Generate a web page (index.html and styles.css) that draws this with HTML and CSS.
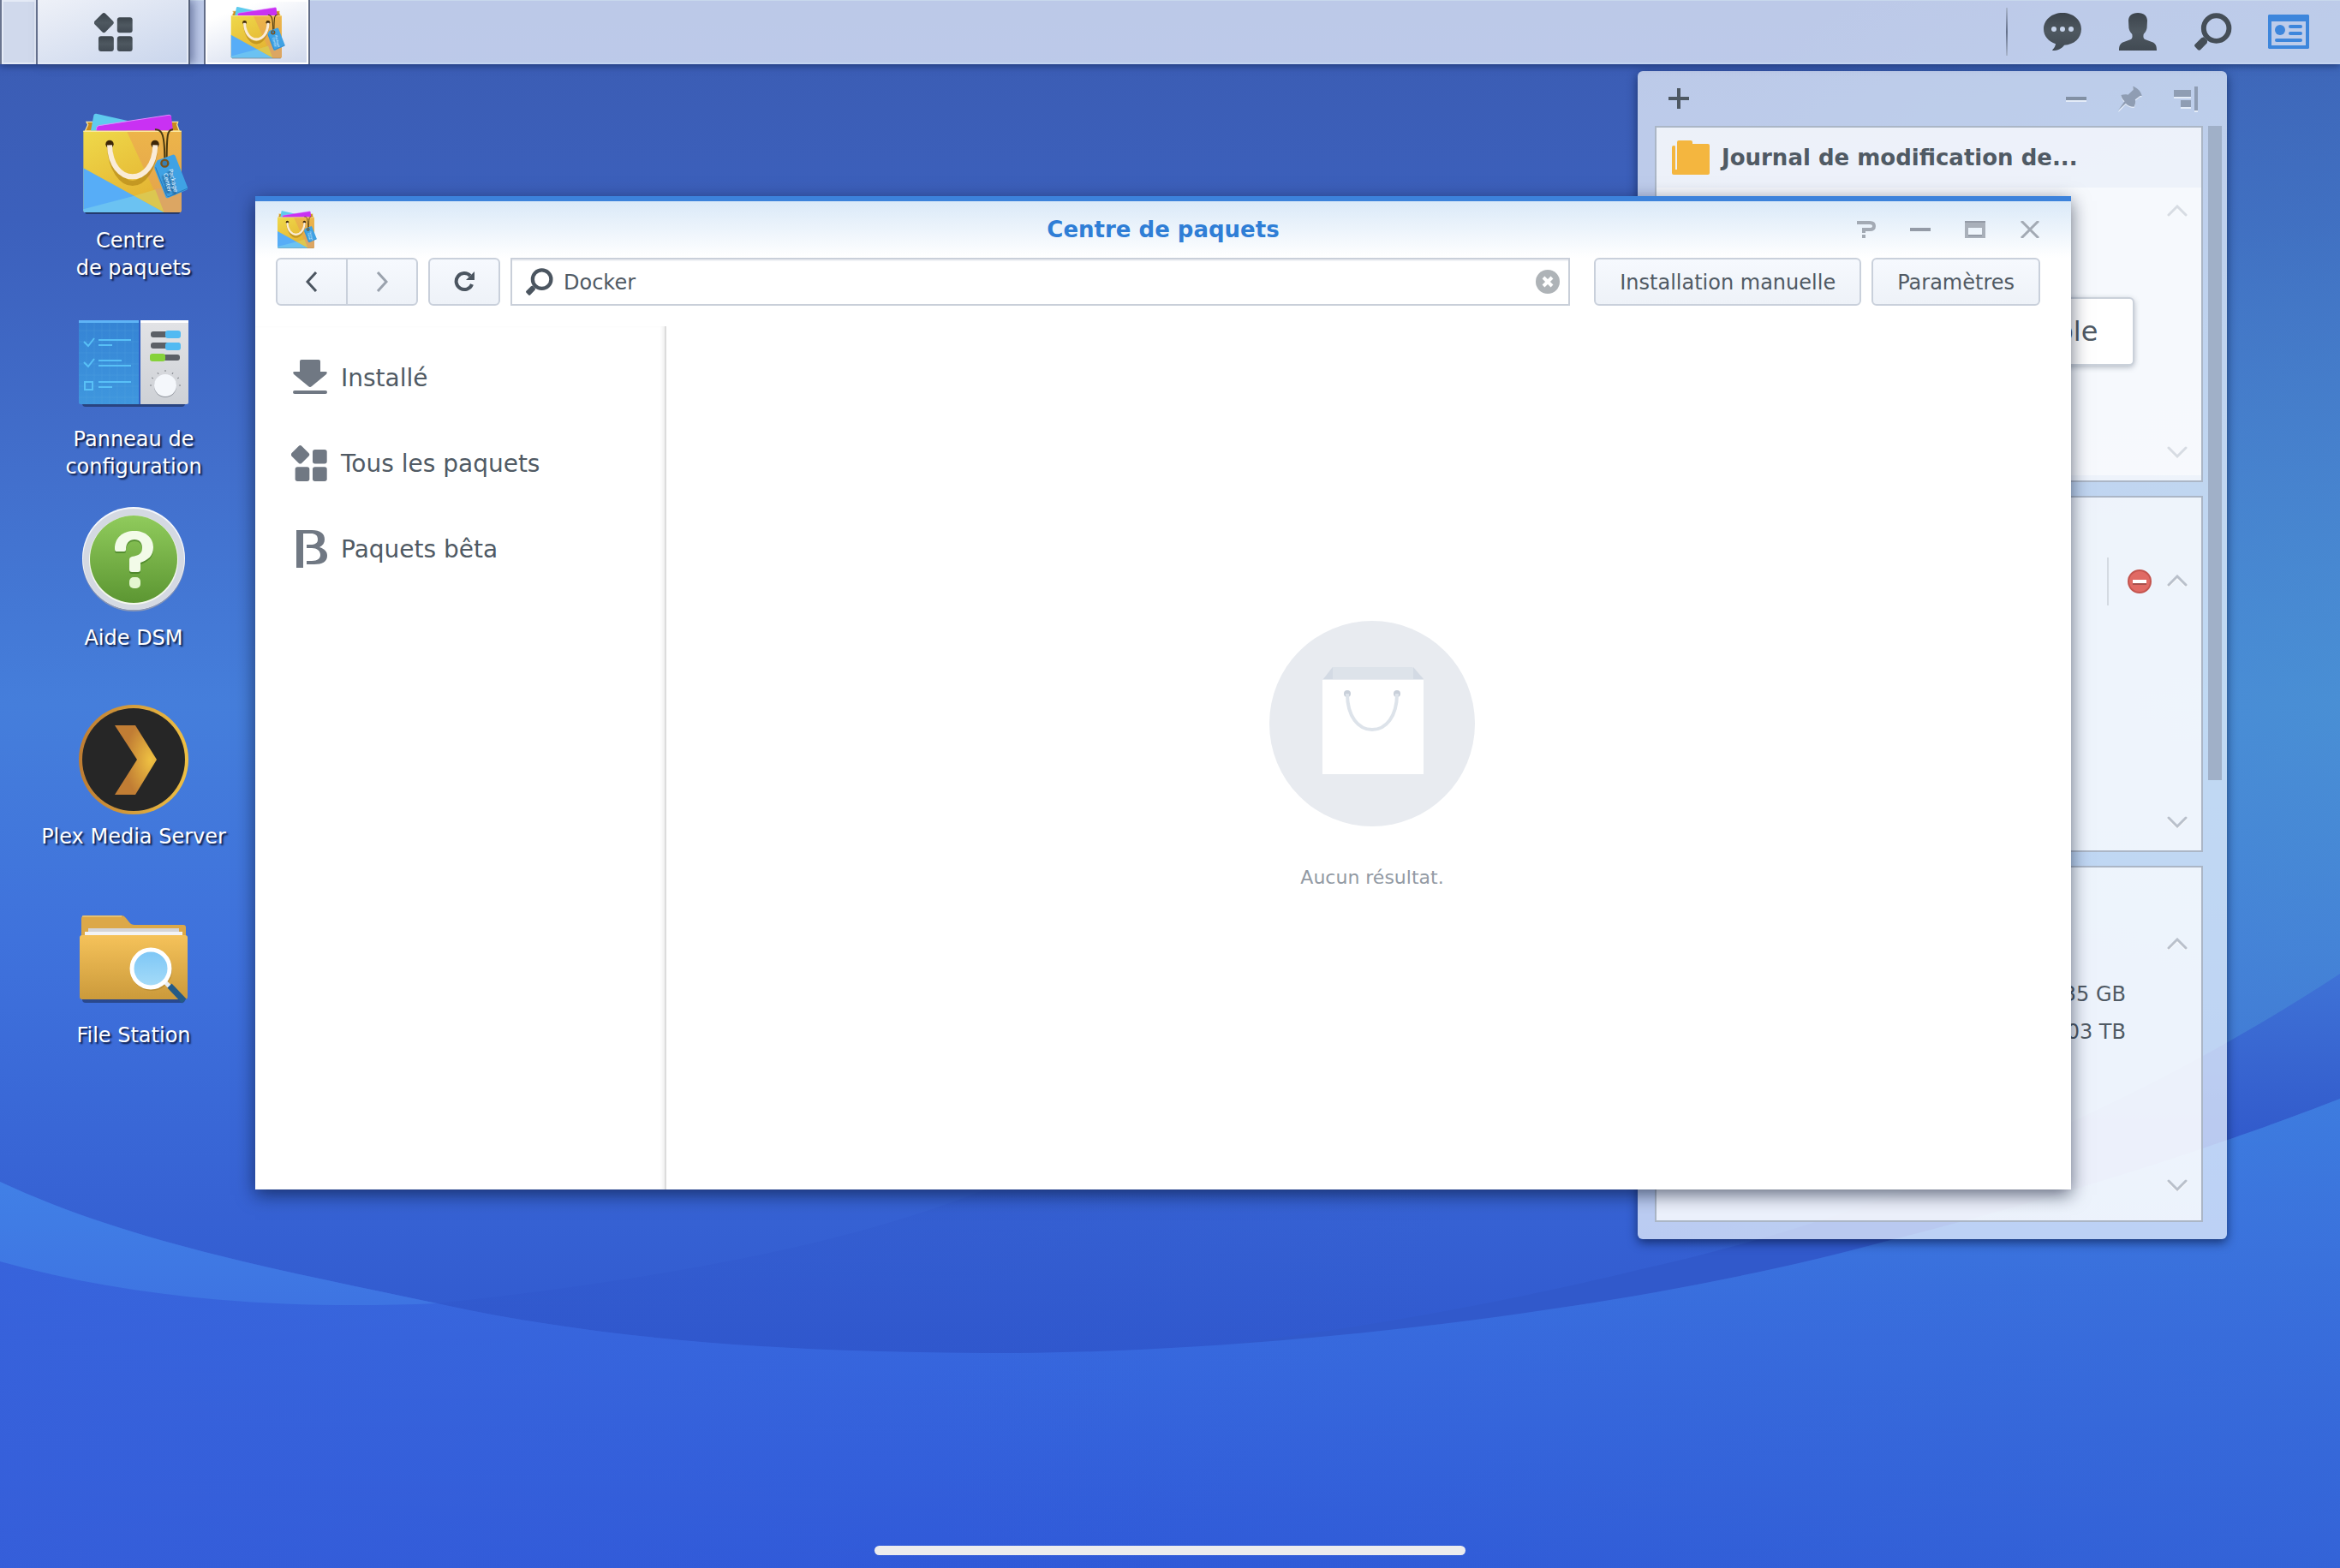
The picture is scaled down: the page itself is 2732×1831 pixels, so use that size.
FILE: index.html
```html
<!DOCTYPE html>
<html lang="fr">
<head>
<meta charset="utf-8">
<meta name="viewport" content="width=device-width, initial-scale=1">
<title>Centre de paquets</title>
<link rel="stylesheet" href="styles.css">
</head>
<body>
<svg class="sprite" aria-hidden="true">
  <defs>
    <linearGradient id="bagYellow" x1="0" y1="0" x2="0.6" y2="1"><stop offset="0" stop-color="#efd94a"/><stop offset="1" stop-color="#e3b030"/></linearGradient>
    <linearGradient id="bagOrange" x1="0" y1="0" x2="0" y2="1"><stop offset="0" stop-color="#edb54a"/><stop offset="1" stop-color="#e2a14c"/></linearGradient>
    <linearGradient id="inkDark" x1="0" y1="0" x2="0" y2="1"><stop offset="0" stop-color="#3c444c"/><stop offset=".5" stop-color="#4e5860"/><stop offset="1" stop-color="#414a53"/></linearGradient>
    <symbol id="bag" viewBox="276 381 384 384">
      <path d="M303 427h320l-3 10 8 22H298l10-22z" fill="#c98a1e" stroke="#f7e29a" stroke-width="4"/>
      <path d="M318 458l10-54q2-7 9-6l150 34-20 26z" fill="#5fcbee"/>
      <path d="M338 458v-8q0-7 8-9l245-38q7-1 9 6l6 49z" fill="#c931f3"/>
      <path d="M338 454v-5q0-7 8-9l245-37q7-1 8 4" fill="none" stroke="#e28bff" stroke-width="3"/>
      <rect x="298" y="735" width="332" height="14" rx="5" fill="#14213e" opacity=".75"/>
      <path d="M292 458h343v279q0 7-7 7H299q-7 0-7-7z" fill="url(#bagYellow)"/>
      <path d="M443 458h192v279q0 7-7 7h-53z" fill="url(#bagOrange)"/>
      <path d="M292 589l283 155H299q-7 0-7-7z" fill="#57adf7"/>
      <path d="M292 733l178-47 105 58H299q-7 0-7-7z" fill="#6bc2f2"/>
      <path d="M470 686l80-24 25 82z" fill="#dcc750"/>
      <path d="M543 662l92-16v91q0 7-7 7h-53z" fill="#dca663"/>
      <path d="M292 460h343" stroke="#fbe9a0" stroke-width="4"/>
      <path d="M384 516c4 76 42 126 80 126s76-50 80-126" fill="none" stroke="#a87a10" stroke-opacity=".55" stroke-width="18"/>
      <circle cx="384" cy="505" r="14" fill="#3d2708"/><circle cx="543" cy="505" r="14" fill="#3d2708"/>
      <path d="M384 508c2 70 38 111 80 111s78-41 80-111" fill="none" stroke="#faecd8" stroke-width="18"/>
      <path d="M543 454c24-2 34 14 34 112M606 454c-20-2-22 20-22 112" fill="none" stroke="#4a3a10" stroke-width="6"/>
      <path d="M551 562l54-20q6-2 9 4l43 110q3 6-3 9l-64 28q-7 3-10-4l-38-96q-3-7 0-14z" fill="#3fa2e4"/>
      <path d="M545 586l38 98q3 7 10 4l64-28" fill="none" stroke="#2679bd" stroke-width="3"/>
      <circle cx="577" cy="572" r="12" fill="#3a7fb0" stroke="#7a5218" stroke-width="7"/>
      <text x="0" y="0" transform="translate(590 594) rotate(76)" class="bag-tag">Package</text>
      <text x="0" y="0" transform="translate(572 608) rotate(76)" class="bag-tag">Center</text>
    </symbol>
    <symbol id="grid" viewBox="327 41 136 136">
      <path d="M355 44q6-6 12 0l26 26q6 6 0 12l-26 26q-6 6-12 0l-26-26q-5-6 0-12z"/>
      <rect x="408" y="57" width="54" height="54" rx="9"/><rect x="342" y="123" width="54" height="54" rx="9"/><rect x="408" y="123" width="54" height="54" rx="9"/>
    </symbol>
    <symbol id="lens" viewBox="786 44 134 134">
      <circle cx="864" cy="99" r="45" fill="none" stroke-width="18"/>
      <path d="M819 130l13 13-1 8-23 24q-5 5-10 0l-10-11q-4-5 1-9l22-22z" stroke="none"/>
    </symbol>
    <symbol id="up" viewBox="0 0 24 14"><path d="M2 13L12 3l10 10" fill="none" stroke="#fff" stroke-width="3" stroke-linecap="round"/><path d="M2 12L12 2l10 10" fill="none" stroke="#b9c0cb" stroke-width="3" stroke-linecap="round"/></symbol>
    <symbol id="down" viewBox="0 0 24 14"><path d="M2 3l10 10L22 3" fill="none" stroke="#fff" stroke-width="3" stroke-linecap="round"/><path d="M2 2l10 10L22 2" fill="none" stroke="#b9c0cb" stroke-width="3" stroke-linecap="round"/></symbol>
  </defs>
</svg>

<svg class="wallpaper" viewBox="0 0 2732 1831" preserveAspectRatio="none" aria-hidden="true">
  <defs>
    <linearGradient id="sky" x1="0" y1="0" x2="0" y2="1">
      <stop offset="0" stop-color="#3b5cb2"/><stop offset=".14" stop-color="#3c60bc"/><stop offset=".3" stop-color="#426fcc"/><stop offset=".45" stop-color="#457edb"/><stop offset=".6" stop-color="#3f72dc"/><stop offset=".76" stop-color="#3763d4"/><stop offset=".87" stop-color="#3058ce"/>
    </linearGradient>
    <radialGradient id="skyRight" cx="2732" cy="820" r="1000" gradientUnits="userSpaceOnUse"><stop offset="0" stop-color="#4c9ad0" stop-opacity=".6"/><stop offset=".5" stop-color="#4c9ad0" stop-opacity=".32"/><stop offset="1" stop-color="#4c9ad0" stop-opacity="0"/></radialGradient>
    <linearGradient id="shade" x1="510" y1="0" x2="1700" y2="0" gradientUnits="userSpaceOnUse"><stop offset="0" stop-color="#2c50c6" stop-opacity=".22"/><stop offset=".5" stop-color="#2c50c6" stop-opacity=".18"/><stop offset="1" stop-color="#2c50c6" stop-opacity="0"/></linearGradient>
    <linearGradient id="band" x1="0" y1="1137" x2="0" y2="1340" gradientUnits="userSpaceOnUse"><stop offset="0" stop-color="#3f72d6"/><stop offset="1" stop-color="#3159cb"/></linearGradient>
    <linearGradient id="sea" x1="0" y1="1290" x2="0" y2="1831" gradientUnits="userSpaceOnUse"><stop offset="0" stop-color="#4080e4"/><stop offset=".5" stop-color="#3768de"/><stop offset="1" stop-color="#2f58d8"/></linearGradient>
    <linearGradient id="seaLeft" x1="0" y1="0" x2="1" y2="0"><stop offset="0" stop-color="#3760da" stop-opacity=".8"/><stop offset=".5" stop-color="#3760da" stop-opacity="0"/></linearGradient>
    <linearGradient id="seaRight" x1="0" y1="0" x2="1" y2="0"><stop offset=".4" stop-color="#3a74d6" stop-opacity="0"/><stop offset="1" stop-color="#3a74d6" stop-opacity=".4"/></linearGradient>
    <linearGradient id="sliver" x1="0" y1="1380" x2="0" y2="1523" gradientUnits="userSpaceOnUse"><stop offset="0" stop-color="#4180e6"/><stop offset="1" stop-color="#3e74e2"/></linearGradient>
    <path id="seaShape" d="M0 1380C150 1450 320 1482 510 1522C720 1568 940 1580 1190 1580C1480 1578 1900 1532 2200 1450C2400 1400 2600 1335 2732 1283V1831H0z"/>
  </defs>
  <rect width="2732" height="1831" fill="url(#sky)"/>
  <rect width="2732" height="1831" fill="url(#skyRight)"/>
  <path d="M510 1522C784 1493 1000 1450 1150 1389L1700 1300V1600H510z" fill="url(#shade)"/>
  <path d="M2732 1137C2500 1290 2200 1420 1912 1483C1780 1515 1600 1552 1366 1578L2732 1581z" fill="url(#band)"/>
  <use href="#seaShape" fill="url(#sea)"/>
  <use href="#seaShape" fill="url(#seaLeft)"/>
  <use href="#seaShape" fill="url(#seaRight)"/>
  <path d="M0 1380C150 1450 320 1482 510 1522C320 1530 150 1515 0 1473z" fill="url(#sliver)"/>
</svg>

<header class="taskbar">
  <button class="show-desktop" aria-label="Afficher le bureau"></button>
  <button class="main-menu" aria-label="Menu principal"><svg width="45" height="45" fill="url(#inkDark)"><use href="#grid"/></svg></button>
  <button class="task" aria-label="Centre de paquets"><svg width="66" height="66"><use href="#bag"/></svg></button>
  <div class="tray">
    <button aria-label="Notifications"><svg width="44" height="44" viewBox="258 45 132 132"><path fill="url(#inkDark)" d="M324 45c37 0 66 24 66 57 0 32-26 55-60 56-8 12-24 19-39 19-3 0-3-2-1-4 6-5 9-12 10-19-25-9-42-28-42-52 0-33 29-57 66-57z"/><g fill="#c6d3ea"><circle cx="294" cy="102" r="9"/><circle cx="324" cy="102" r="9"/><circle cx="354" cy="102" r="9"/></g></svg></button>
    <button aria-label="Options"><svg width="44" height="44" viewBox="522 45 132 132"><path fill="url(#inkDark)" d="M588 45c22 0 32 11 33 27l-1 20c0 14-6 20-12 28-2 10 0 16 5 18l24 9c12 4 17 12 17 30H522c0-18 5-26 17-30l24-9c5-2 7-8 5-18-6-8-12-14-12-28l-1-20c1-16 11-27 33-27z"/></svg></button>
    <button aria-label="Rechercher"><svg width="44" height="44" fill="#454e57" stroke="#454e57"><use href="#lens"/></svg></button>
    <button aria-label="Widgets"><svg width="48" height="40" viewBox="0 0 48 40"><path fill="#3d86dc" fill-rule="evenodd" d="M1 0h46l1 1v38l-1 1H1l-1-1V1zM4 8v28h40V8z"/><g fill="#3d86dc"><circle cx="14" cy="18" r="6"/><rect x="24" y="12" width="16" height="4" rx="2"/><rect x="24" y="20" width="16" height="4" rx="2"/><rect x="8" y="28" width="32" height="4" rx="2"/></g></svg></button>
  </div>
</header>

<main class="desktop">
  <nav class="shortcuts">
    <a href="#"><svg width="128" height="128"><use href="#bag"/></svg><span>Centre&nbsp;<br>de paquets</span></a>
    <a href="#">
      <svg width="128" height="128" viewBox="0 0 128 128">
        <defs><linearGradient id="cpBlue" x1="0" y1="0" x2="0" y2="1"><stop offset="0" stop-color="#3583d4"/><stop offset="1" stop-color="#3f97de"/></linearGradient><linearGradient id="cpGray" x1="0" y1="0" x2="0" y2="1"><stop offset="0" stop-color="#e2e3e6"/><stop offset="1" stop-color="#ced1d6"/></linearGradient></defs>
        <rect x="4" y="106" width="120" height="10" rx="4" fill="#1a2a50" opacity=".6"/>
        <rect x="0" y="15" width="73" height="98" rx="2" fill="url(#cpBlue)"/><rect x="0" y="15" width="72" height="3" fill="#5fb4f6"/>
        <path d="M9 18v95M18 18v95M27 18v95M36 18v95M45 18v95M54 18v95M63 18v95M0 27h71M0 40h71M0 53h71M0 66h71M0 79h71M0 92h71M0 105h71" stroke="#5fb0ea" stroke-opacity=".22"/>
        <path d="M70 15h2v98h-2z" fill="#3060c4"/>
        <path d="M72 15h54q2 0 2 2v94q0 2-2 2H72z" fill="url(#cpGray)"/><rect x="72" y="15" width="56" height="3" fill="#fff"/>
        <g fill="#58c0f6"><rect x="23" y="37" width="38" height="2"/><rect x="23" y="43" width="16" height="2"/><rect x="23" y="61" width="27" height="2"/><rect x="23" y="67" width="38" height="2"/><rect x="23" y="86" width="38" height="2"/><rect x="23" y="92" width="16" height="2"/></g>
        <g fill="none" stroke="#58c0f6" stroke-width="2"><path d="M6 40l5 5 7-9M6 64l5 5 7-9"/><rect x="7" y="87" width="9" height="9"/></g>
        <g fill="#5c6066"><rect x="84" y="28" width="34" height="7" rx="3"/><rect x="84" y="41" width="34" height="7" rx="3"/><rect x="84" y="55" width="34" height="7" rx="3"/></g>
        <g fill="#52baf2"><rect x="101" y="27" width="18" height="9" rx="3"/><rect x="101" y="41" width="18" height="9" rx="3"/></g><rect x="83" y="54" width="18" height="9" rx="3" fill="#86d23a"/>
        <path d="M83 91h2M117 91h2M85 82l2 1M117 82l-2 1M92 76l1 2M110 76l-1 2M101 73v2" stroke="#7c8086" stroke-width="1"/>
        <circle cx="101" cy="92" r="13" fill="#8f949c"/><circle cx="101" cy="91" r="13" fill="#f4f7fb"/>
      </svg>
      <span>Panneau de<br>configuration</span></a>
    <a href="#">
      <svg width="128" height="128" viewBox="0 0 128 128">
        <defs><linearGradient id="helpGreen" x1="0" y1="0" x2="0" y2="1"><stop offset="0" stop-color="#90cb5c"/><stop offset="1" stop-color="#5c9632"/></linearGradient></defs>
        <circle cx="64" cy="63" r="60" fill="#8b98b6"/><circle cx="64" cy="61" r="60" fill="#f4f7fc"/><circle cx="64" cy="62" r="59" fill="#d4d9e2"/><circle cx="64" cy="63" r="52" fill="#f4f8ee"/><circle cx="64" cy="62" r="51" fill="url(#helpGreen)"/>
        <path d="M42 50c0-13 9-21 23-21 13 0 22 8 22 19 0 10-6 15-15 18v8q0 3-3 3h-7q-3 0-3-3V62q0-2 3-3c8-1 12-4 12-10s-3-10-9-10-10 4-10 12q0 2-2 2h-9q-2 0-2-3z" fill="#2f6a18" opacity=".5" transform="translate(0 2)"/>
        <path d="M42 50c0-13 9-21 23-21 13 0 22 8 22 19 0 10-6 15-15 18v8q0 3-3 3h-7q-3 0-3-3V62q0-2 3-3c8-1 12-4 12-10s-3-10-9-10-10 4-10 12q0 2-2 2h-9q-2 0-2-3z" fill="#f2fbe8"/><rect x="59" y="83" width="13" height="13" rx="5" fill="#e4f6d0"/>
      </svg>
      <span>Aide DSM</span></a>
    <a href="#">
      <svg width="128" height="128" viewBox="0 0 128 128">
        <defs><linearGradient id="plexRing"><stop offset="0" stop-color="#bd7c33"/><stop offset="1" stop-color="#efc043"/></linearGradient><radialGradient id="plexGold" cx=".85" cy=".5" r=".6"><stop offset="0" stop-color="#efc142"/><stop offset="1" stop-color="#c17d34"/></radialGradient></defs>
        <circle cx="64" cy="64" r="64" fill="url(#plexRing)"/><circle cx="64" cy="64" r="60" fill="#262626"/>
        <path d="M42 24h24l25 40-25 41H42l26-41z" fill="url(#plexGold)"/>
      </svg>
      <span>Plex Media Server</span></a>
    <a href="#">
      <svg width="128" height="128" viewBox="0 0 128 128">
        <defs><linearGradient id="folderFront" x1="0" y1="0" x2="0" y2="1"><stop offset="0" stop-color="#f5c25a"/><stop offset="1" stop-color="#cb9a3b"/></linearGradient><linearGradient id="glass" x1="0" y1="0" x2="0" y2="1"><stop offset="0" stop-color="#7cc6f6"/><stop offset="1" stop-color="#a6dcf8"/></linearGradient></defs>
        <rect x="4" y="106" width="120" height="10" rx="4" fill="#1a2a50" opacity=".55"/>
        <path d="M3 18q0-4 4-4h43q3 0 5 3l4 5q2 3 6 3h57q3 0 3 3v20H3z" fill="#dca848"/><path d="M4 15h46" stroke="#f4d690"/>
        <rect x="11" y="29" width="106" height="6" fill="#d5d5d8"/><rect x="7" y="33" width="114" height="8" fill="#f3f3f5"/>
        <path d="M1 40q0-3 3-3h120q3 0 3 3v69q0 3-3 3H4q-3 0-3-3z" fill="url(#folderFront)"/>
        <circle cx="85" cy="78" r="24" fill="#a67c28" opacity=".5"/><path d="M101 92l5 5" stroke="#e8eef4" stroke-width="5"/><path d="M106 96l17 18" stroke="#245a86" stroke-width="7"/>
        <circle cx="84" cy="76" r="22" fill="url(#glass)" stroke="#fff" stroke-width="5"/>
      </svg>
      <span>File Station</span></a>
  </nav>

  <aside class="widgets">
    <div class="widgets-bar">
      <button aria-label="Ajouter"><svg width="24" height="24" viewBox="0 0 24 24"><path d="M10 0h4v10h10v4H14v10h-4V14H0v-4h10z" fill="#4e5863"/></svg></button>
      <div class="widgets-tools">
        <button aria-label="Réduire"><svg width="24" height="30" viewBox="0 0 24 30"><path d="M0 16h24v2H0z" fill="#e4ecf8"/><path d="M0 12h24v4H0z" fill="#8290a4"/></svg></button>
        <button aria-label="Épingler"><svg width="30" height="30" viewBox="522 303 87 90"><path d="M576 305c-4-3 2-3 6 0 12 6 20 15 24 28 1 4-2 4-5 2l-18 14c2 10 0 18-4 25-12 0-22-4-29-12l-26 28 2-7 20-28c-8-7-11-14-12-22 9-3 17-3 24-1l18-17z" fill="#e4ecf8" transform="translate(0 4)"/><path d="M576 305c-4-3 2-3 6 0 12 6 20 15 24 28 1 4-2 4-5 2l-18 14c2 10 0 18-4 25-12 0-22-4-29-12l-28 26 4-5 20-28c-8-7-11-14-12-22 9-3 17-3 24-1l18-17z" fill="#8f9db3"/></svg></button>
        <button aria-label="Ancrer à droite"><svg width="28" height="30" viewBox="0 0 28 30"><path d="M0 6h20v8H0zM8 18h12v8H8zM24 2h4v28h-4z" fill="#e4ecf8"/><path d="M0 4h20v8H0zM8 16h12v8H8zM24 0h4v28h-4z" fill="#8f9db3"/></svg></button>
      </div>
    </div>
    <div class="widgets-body">
      <div class="cards">
        <section class="card card-log">
          <h2><svg width="44" height="40" viewBox="0 0 44 40"><path d="M0 8q0-2 2-2h1q1 0 1 2v26h2V2q0-2 2-2h14q2 0 2 2v2h18q2 0 2 2v32q0 2-2 2H2q-2 0-2-2z" fill="#f4b63f"/></svg>Journal de modification de...</h2>
          <div class="card-row">
            <div class="card-content"><button class="notice">Aucun journal disponible</button></div>
            <div class="pager faded"><button aria-label="Précédent"><svg width="24" height="14"><use href="#up"/></svg></button><button aria-label="Suivant"><svg width="24" height="14"><use href="#down"/></svg></button></div>
          </div>
        </section>
        <section class="card">
          <div class="card-row">
            <div class="card-content user"><span class="rule"></span><button class="kick" aria-label="Déconnecter"><svg width="28" height="28" viewBox="0 0 28 28"><circle cx="14" cy="14" r="13" fill="#e06a64" stroke="#c4554f" stroke-width="2"/><path d="M6 16h16v2H6z" fill="#a8504c"/><path d="M6 12h16v4H6z" fill="#fff"/></svg></button></div>
            <div class="pager"><button aria-label="Précédent"><svg width="24" height="14"><use href="#up"/></svg></button><button aria-label="Suivant"><svg width="24" height="14"><use href="#down"/></svg></button></div>
          </div>
        </section>
        <section class="card card-volume">
          <div class="card-row">
            <ul class="card-content sizes"><li>35 GB</li><li>03 TB</li></ul>
            <div class="pager"><button aria-label="Précédent"><svg width="24" height="14"><use href="#up"/></svg></button><button aria-label="Suivant"><svg width="24" height="14"><use href="#down"/></svg></button></div>
          </div>
        </section>
      </div>
      <div class="scroll"><div class="thumb"></div></div>
    </div>
  </aside>

  <section class="window">
    <header class="titlebar">
      <div class="title-icon"><svg width="48" height="48"><use href="#bag"/></svg></div>
      <h1>Centre de paquets</h1>
      <div class="controls">
        <button aria-label="Aide"><svg width="22" height="20" viewBox="0 0 22 20"><path d="M0 2h15q5 0 5 4t-5 4H8v4" fill="none" stroke="#a3aab4" stroke-width="4"/><path d="M6 16h4v4H6z" fill="#a3aab4"/></svg></button>
        <button aria-label="Réduire"><svg width="24" height="20" viewBox="0 0 24 20"><path d="M0 8h24v4H0z" fill="#949ba7"/></svg></button>
        <button aria-label="Agrandir"><svg width="24" height="20" viewBox="0 0 24 20"><path d="M0 0h24v20H0zM4 8v8h16V8z" fill="#a9b0ba" fill-rule="evenodd"/><path d="M0 0h24v2H0zM4 16h16v2H4z" fill="#949ba7"/></svg></button>
        <button aria-label="Fermer"><svg width="24" height="20" viewBox="0 0 24 20"><path d="M2 0l20 20M22 0L2 20" stroke="#a3aab4" stroke-width="3"/></svg></button>
      </div>
    </header>
    <div class="toolbar">
      <div class="group">
        <button aria-label="Précédent"><svg width="14" height="24" viewBox="0 0 14 24"><path d="M12 1L2 12l10 11" fill="none" stroke="#4b5560" stroke-width="3"/></svg></button>
        <button aria-label="Suivant"><svg width="14" height="24" viewBox="0 0 14 24"><path d="M2 1l10 11L2 23" fill="none" stroke="#9aa2ad" stroke-width="3"/></svg></button>
      </div>
      <button class="btn reload" aria-label="Actualiser"><svg width="24" height="24" viewBox="0 0 24 24"><path d="M21 15a9.500 9.500 0 1 1-2-10" fill="none" stroke="#4b5560" stroke-width="4"/><path d="M24 0v10H14z" fill="#4b5560"/></svg></button>
      <label class="search">
        <svg width="32" height="32" fill="#4b5560" stroke="#4b5560"><use href="#lens"/></svg>
        <input type="text" value="Docker" aria-label="Rechercher">
        <button aria-label="Effacer"><svg width="28" height="28" viewBox="0 0 28 28"><circle cx="14" cy="14" r="14" fill="#aeb3b7"/><path d="M9 9l10 10M19 9L9 19" stroke="#fff" stroke-width="4"/></svg></button>
      </label>
      <button class="btn">Installation manuelle</button>
      <button class="btn">Paramètres</button>
    </div>
    <div class="content">
      <nav class="sidebar">
        <a href="#"><svg width="42" height="42" viewBox="0 0 42 42"><path d="M12 0h20q2 0 2 2v12h6q3 0 1 3L24 31q-2 2-4 0L3 17q-2-3 1-3h6V2q0-2 2-2zM4 36h36q2 0 2 2t-2 2H4q-2 0-2-2t2-2z" fill="#707883"/></svg><span>Installé</span></a>
        <a href="#"><svg width="42" height="42" fill="#707883"><use href="#grid"/></svg><span>Tous les paquets</span></a>
        <a href="#"><svg width="42" height="44" viewBox="0 0 42 44"><path d="M6 0h18c10 0 15 4 15 11 0 4-2 7-6 9 6 2 9 5 9 10 0 7-6 10-15 10h-9v-4h6c7 0 10-3 10-7 0-5-4-8-10-8h-6v-4h4c6 0 9-2 9-6 0-5-3-7-8-7h-9v40H6z" fill="#707883"/></svg><span>Paquets bêta</span></a>
      </nav>
      <div class="empty">
        <svg width="240" height="240" viewBox="0 0 240 240"><circle cx="120" cy="120" r="120" fill="#e8ebf0"/><path d="M63 68l11-14h93l13 14z" fill="#dde3ea"/><path d="M63 68l11-14v14zM168 54v14h12z" fill="#d3dae4"/><path d="M62 69h118v110H62z" fill="#fff"/><circle cx="91" cy="85" r="4" fill="#c8cfd9"/><circle cx="149" cy="85" r="4" fill="#c8cfd9"/><path d="M91 85c0 27 13 42 29 42s29-15 29-42" fill="none" stroke="#dde3ea" stroke-width="4"/></svg>
        <p>Aucun résultat.</p>
      </div>
    </div>
  </section>
</main>
<div class="home-bar"></div>
</body>
</html>
```
FILE: styles.css
```css
* { box-sizing: border-box; }

body {
  margin: 0;
  min-height: 100vh;
  display: flex;
  flex-direction: column;
  position: relative;
  overflow: hidden;
  font: 24px/32px Verdana, "DejaVu Sans", sans-serif;
  color: #505a64;
}

button {
  margin: 0;
  padding: 0;
  border: 0;
  background: none;
  font: inherit;
  color: inherit;
}

svg { display: block; flex: none; }
a { color: inherit; text-decoration: none; }

.sprite { position: absolute; width: 0; height: 0; }
.wallpaper { position: absolute; inset: 0; width: 100%; height: 100%; z-index: -1; }
.bag-tag { font: 20px "DejaVu Sans", sans-serif; fill: #eaf6ff; }

/* Taskbar */
.taskbar {
  display: flex;
  height: 75px;
  position: relative;
  z-index: 3;
  background: rgba(244, 248, 255, .7);
  border-top: 1px solid #c8d8ec;
  border-bottom: 2px solid #c4d4f0;
  box-shadow: 0 2px 8px rgba(10, 25, 70, .55);
}
.taskbar > button { display: grid; place-items: center; margin: -1px 0 -2px; }
.show-desktop {
  width: 44px;
  background: #d0d9ec;
  border: solid #69748f;
  border-width: 0 2px;
  box-shadow: inset 0 0 0 2px #e4eaf6;
}
.main-menu {
  width: 178px;
  background: linear-gradient(160deg, #eef1f8, #c9d5ec);
  border-right: 2px solid #56617a;
  box-shadow: inset -2px -2px 0 #e4eaf6, 4px 0 10px rgba(60, 75, 120, .6);
}
.taskbar > .task {
  width: 124px;
  margin-left: 16px;
  background: linear-gradient(160deg, #fff 20%, #cfd8ec);
  border: solid #626d88;
  border-width: 0 2px;
  box-shadow: inset 0 0 0 2px #fff;
}
.tray { display: flex; margin-left: auto; padding-right: 16px; }
.tray::before {
  content: "";
  width: 2px;
  height: 56px;
  margin: 8px 20px 0 0;
  background: linear-gradient(#a9b5cc, #64708a, #a9b5cc);
}
.tray button { width: 88px; display: grid; place-items: center; }

/* Desktop */
.desktop { flex: 1; position: relative; padding-top: 52px; }
.shortcuts { display: grid; grid-auto-rows: 232px; width: 312px; }
.shortcuts a {
  display: flex;
  flex-direction: column;
  align-items: center;
  gap: 10px;
  color: #fff;
  text-align: center;
  text-shadow: 2px 2px 2px rgba(0, 10, 40, .85);
}

/* Widget panel */
.widgets {
  position: absolute;
  top: 8px;
  right: 132px;
  width: 688px;
  padding: 0 6px 20px 20px;
  border-radius: 6px;
  background: rgba(244, 250, 255, .7);
  box-shadow: 0 4px 12px rgba(5, 20, 60, .65);
}
.widgets-bar {
  display: flex;
  justify-content: space-between;
  height: 64px;
  padding: 18px 28px 16px 16px;
}
.widgets-bar button { height: 28px; }
.widgets-tools { display: flex; gap: 36px; }
.widgets-body { display: flex; gap: 6px; }
.cards { flex: 1; display: grid; gap: 16px; }
.scroll { width: 16px; }
.thumb { height: 764px; background: #a0b0c8; }

.card {
  display: flex;
  flex-direction: column;
  height: 416px;
  border: 2px solid #abb6c6;
  background: rgba(255, 255, 255, .72);
}
.card h2 {
  display: flex;
  align-items: center;
  gap: 14px;
  height: 70px;
  margin: 0;
  padding-left: 18px;
  font-size: 26px;
  line-height: 32px;
}
.card-row { flex: 1; display: flex; }
.card-content { flex: 1; margin: 0; }
.pager {
  display: flex;
  flex-direction: column;
  justify-content: space-between;
  padding: 90px 16px 26px 0;
}
.card-log .card-row { background: rgba(255, 255, 255, .5); margin-bottom: 6px; }
.card-log .pager { padding: 20px 16px 20px 0; }
.card-volume .pager { padding: 82px 16px 34px 0; }
.faded { opacity: .5; }
.card-log .card-content { padding: 128px 38px 0 0; text-align: right; }
.notice {
  width: 480px;
  height: 80px;
  border: 2px solid #cad1da;
  border-radius: 6px;
  background: #fff;
  box-shadow: 0 2px 6px rgba(60, 75, 95, .35);
  font-size: 32px;
}
.user {
  display: flex;
  justify-content: flex-end;
  align-items: flex-start;
  gap: 22px;
  padding: 70px 18px 0 0;
}
.rule { width: 2px; height: 56px; background: #d4dae2; }
.kick { margin-top: 14px; }
.sizes {
  list-style: none;
  padding: 126px 48px 0 0;
  line-height: 44px;
  text-align: right;
}

/* Package Center window */
.window {
  position: absolute;
  top: 154px;
  left: 298px;
  right: 314px;
  height: 1160px;
  display: flex;
  flex-direction: column;
  border-top: 6px solid #3c82db;
  background: #fff;
  box-shadow: 0 6px 20px rgba(5, 15, 40, .6);
}
.titlebar {
  display: grid;
  grid-template-columns: 1fr auto 1fr;
  align-items: center;
  height: 66px;
  background: linear-gradient(#dae9f8, #fff);
}
.title-icon { padding-left: 24px; }
h1 { margin: 0; font-size: 26px; line-height: 32px; color: #2f7ed6; }
.controls { display: flex; justify-content: flex-end; gap: 40px; padding-right: 36px; }

.toolbar { display: flex; gap: 12px; padding: 0 36px 24px 24px; }
.group, .btn {
  height: 56px;
  border: 2px solid #c9d0db;
  border-radius: 6px;
  background: linear-gradient(#f6f9fe, #eef2f8);
}
.group { display: flex; width: 166px; }
.group button { flex: 1; display: grid; place-items: center; }
.group button + button { border-left: 2px solid #c9d0db; }
.btn { padding: 2px 28px 0; white-space: nowrap; }
.reload { width: 84px; padding-top: 0; display: grid; place-items: center; }
.search {
  flex: 1;
  display: flex;
  align-items: center;
  gap: 12px;
  height: 56px;
  margin-right: 16px;
  padding: 0 10px 0 16px;
  border: 2px solid #c9cfd9;
  box-shadow: inset 0 2px 0 #f0f2f5;
}
.search input {
  flex: 1;
  min-width: 0;
  border: 0;
  padding: 2px 0 0;
  background: none;
  font: inherit;
  color: inherit;
  outline: 0;
}

.content { flex: 1; display: flex; }
.sidebar {
  width: 480px;
  padding-top: 10px;
  border-right: 2px solid #dcdcdc;
  box-shadow: inset -4px 0 4px -2px #ececec;
  font-size: 28px;
}
.sidebar a { display: flex; align-items: center; gap: 16px; height: 100px; padding-left: 42px; }
.sidebar span { padding-top: 2px; }
.empty {
  flex: 1;
  display: flex;
  flex-direction: column;
  align-items: center;
  justify-content: center;
  gap: 46px;
  padding: 0 0 6px 8px;
  font-size: 22px;
  line-height: 28px;
  color: #929aa4;
}
.empty p { margin: 0; }

.home-bar {
  position: absolute;
  left: 50%;
  bottom: 15px;
  width: 690px;
  height: 11px;
  margin-left: -345px;
  border-radius: 6px;
  background: #ececee;
}
```
